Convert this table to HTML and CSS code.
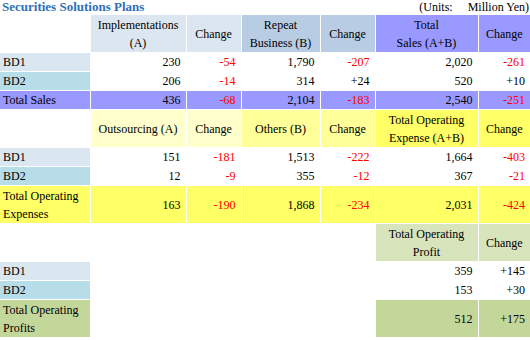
FILE: index.html
```html
<!DOCTYPE html>
<html>
<head>
<meta charset="utf-8">
<link rel="stylesheet" href="styles.css">
</head>
<body>
<div class="top">
  <div class="title">Securities Solutions Plans</div>
  <div class="units">(Units:&nbsp;&nbsp;&nbsp;&nbsp; Million Yen)</div>
</div>
<table class="plan">
  <colgroup>
    <col class="c0"><col class="c1"><col class="c2"><col class="c3"><col class="c4"><col class="c5"><col class="c6">
  </colgroup>
  <tr class="head">
    <td class="blank"></td>
    <td class="b-lt">Implementations (A)</td>
    <td class="b-lt">Change</td>
    <td class="b-md">Repeat Business (B)</td>
    <td class="b-md">Change</td>
    <td class="purple">Total<br>Sales (A+B)</td>
    <td class="purple">Change</td>
  </tr>
  <tr class="data">
    <td class="lbl l1">BD1</td>
    <td class="num">230</td><td class="num neg">-54</td>
    <td class="num">1,790</td><td class="num neg">-207</td>
    <td class="num">2,020</td><td class="num neg">-261</td>
  </tr>
  <tr class="data">
    <td class="lbl l2">BD2</td>
    <td class="num">206</td><td class="num neg">-14</td>
    <td class="num">314</td><td class="num">+24</td>
    <td class="num">520</td><td class="num">+10</td>
  </tr>
  <tr class="data purple">
    <td class="lbl">Total Sales</td>
    <td class="num">436</td><td class="num neg">-68</td>
    <td class="num">2,104</td><td class="num neg">-183</td>
    <td class="num">2,540</td><td class="num neg">-251</td>
  </tr>
  <tr class="head">
    <td class="blank"></td>
    <td class="y1">Outsourcing (A)</td>
    <td class="y1">Change</td>
    <td class="y2">Others (B)</td>
    <td class="y2">Change</td>
    <td class="y3">Total Operating<br>Expense (A+B)</td>
    <td class="y3">Change</td>
  </tr>
  <tr class="data">
    <td class="lbl l1">BD1</td>
    <td class="num">151</td><td class="num neg">-181</td>
    <td class="num">1,513</td><td class="num neg">-222</td>
    <td class="num">1,664</td><td class="num neg">-403</td>
  </tr>
  <tr class="data">
    <td class="lbl l2">BD2</td>
    <td class="num">12</td><td class="num neg">-9</td>
    <td class="num">355</td><td class="num neg">-12</td>
    <td class="num">367</td><td class="num neg">-21</td>
  </tr>
  <tr class="tall y3">
    <td class="lbl">Total Operating Expenses</td>
    <td class="num">163</td><td class="num neg">-190</td>
    <td class="num">1,868</td><td class="num neg">-234</td>
    <td class="num">2,031</td><td class="num neg">-424</td>
  </tr>
  <tr class="head">
    <td class="blank"></td><td class="blank"></td><td class="blank"></td><td class="blank"></td><td class="blank"></td>
    <td class="g1">Total Operating<br>Profit</td>
    <td class="g1">Change</td>
  </tr>
  <tr class="data">
    <td class="lbl l1">BD1</td>
    <td></td><td></td><td></td><td></td>
    <td class="num">359</td><td class="num">+145</td>
  </tr>
  <tr class="data">
    <td class="lbl l2">BD2</td>
    <td></td><td></td><td></td><td></td>
    <td class="num">153</td><td class="num">+30</td>
  </tr>
  <tr class="tall">
    <td class="lbl g2">Total Operating Profits</td>
    <td></td><td></td><td></td><td></td>
    <td class="num g2">512</td><td class="num g2">+175</td>
  </tr>
</table>
</body>
</html>
```
FILE: styles.css
```css
html, body {
  margin: 0;
  padding: 0;
  background: #ffffff;
}
body {
  width: 530px;
  font-family: "Liberation Serif", "Times New Roman", serif;
  font-size: 12px;
  color: #000000;
}
.top {
  display: flex;
  justify-content: space-between;
  align-items: flex-start;
  height: 15px;
}
.title {
  font-weight: bold;
  color: #2E6FB8;
  font-size: 13px;
  line-height: 14px;
  padding-left: 2px;
}
.units {
  line-height: 14px;
  padding-right: 1px;
}
.plan {
  width: 530px;
  table-layout: fixed;
  border-collapse: collapse;
}
.plan td {
  border: 1px solid #ffffff;
  padding: 0 5px 0 3px;
  line-height: 18px;
  vertical-align: middle;
}
.plan tr:first-child td { border-top: 0; }
.plan td:first-child { border-left: 0; }
.plan td:last-child { border-right: 0; }
.c0 { width: 90px; }
.c1 { width: 96px; }
.c2 { width: 55px; }
.c3 { width: 79px; }
.c4 { width: 55px; }
.c5 { width: 103px; }
.c6 { width: 52px; }
.head td {
  height: 37px;
  text-align: center;
  padding: 0 2px;
}
.data td { height: 18px; }
.tall td { height: 37px; }
.lbl { text-align: left; }
.num { text-align: right; }
.neg { color: #FF0000; }
.l1 { background: #DAE7F0; }
.l2 { background: #B7DDE8; }
.b-lt { background: #DCE6F1; }
.b-md { background: #B8CCE4; }
.purple, .purple td { background: #9999FF; }
.y1 { background: #FFFFCC; }
.y2 { background: #FFFF99; }
.y3, .y3 td { background: #FFFF66; }
.g1 { background: #D8E4BC; }
.g2 { background: #C4D79B; }
.blank { background: #ffffff; }
```
